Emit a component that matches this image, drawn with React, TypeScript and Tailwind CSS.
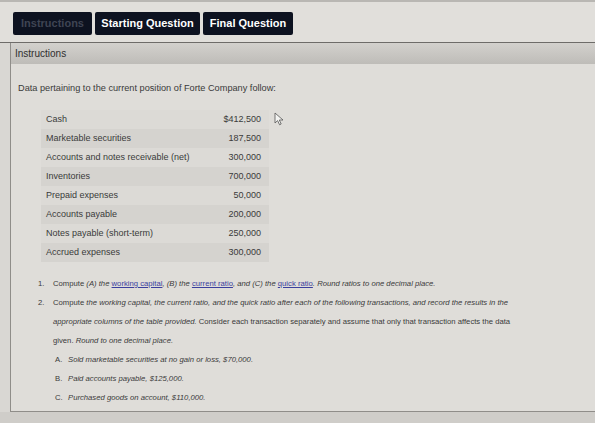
import React from "react";

const rows: [string, string][] = [
  ["Cash", "$412,500"],
  ["Marketable securities", "187,500"],
  ["Accounts and notes receivable (net)", "300,000"],
  ["Inventories", "700,000"],
  ["Prepaid expenses", "50,000"],
  ["Accounts payable", "200,000"],
  ["Notes payable (short-term)", "250,000"],
  ["Accrued expenses", "300,000"],
];

const transactions: [string, string][] = [
  ["A.", "Sold marketable securities at no gain or loss, $70,000."],
  ["B.", "Paid accounts payable, $125,000."],
  ["C.", "Purchased goods on account, $110,000."],
  ["D.", "Paid notes payable, $100,000."],
];

function Link({ children }: { children: React.ReactNode }) {
  return <span className="text-[#3b3f9e] underline">{children}</span>;
}

function Cursor() {
  return (
    <svg
      className="absolute left-[274px] top-[112px]"
      width="11"
      height="14"
      viewBox="0 0 11 14"
    >
      <path
        d="M1 1 L1 11 L3.6 8.6 L5.6 12.8 L7.2 12 L5.3 8 L9 8 Z"
        fill="#f4f4f2"
        stroke="#555"
        strokeWidth="0.8"
      />
    </svg>
  );
}

export default function App() {
  return (
    <div className="relative flex h-[423px] w-[595px] flex-col overflow-hidden bg-[#d9d7d3] font-['Liberation_Sans',Arial,sans-serif] text-[#333]">
      {/* tab strip */}
      <div className="h-[43px] shrink-0 border-t-2 border-b border-t-[#b9b7b3] border-b-[#6e6c69] bg-[#e1dfdb] pl-[13px] pt-[10px]">
        <div className="flex gap-[3px]">
          <div className="flex h-[23px] w-[79px] items-center justify-center rounded-[2px] bg-[#0d1220] text-[11px] font-bold text-[#3f4453]">
            Instructions
          </div>
          <div className="flex h-[23px] w-[105px] items-center justify-center rounded-[2px] bg-[#0d1220] text-[11px] font-bold text-white">
            Starting Question
          </div>
          <div className="flex h-[23px] w-[90px] items-center justify-center rounded-[2px] bg-[#0d1220] text-[11px] font-bold text-white">
            Final Question
          </div>
        </div>
      </div>

      <div className="flex min-h-0 flex-1 flex-col">
        {/* panel */}
        <div className="ml-[10px] flex h-[369px] flex-col overflow-hidden border-b border-l border-[#8f8d89]">
          <div className="flex h-[21px] shrink-0 items-center bg-gradient-to-b from-[#d3d1cd] to-[#bebcb8] pl-[4px] text-[10px] text-[#2f2f2f]">
            Instructions
          </div>
          <div className="flex-1 bg-[#dfddd9] pl-[7px] pt-[18px]">
            <p className="text-[9.2px] leading-[12px] text-[#3a3a3a]">
              Data pertaining to the current position of Forte Company follow:
            </p>

            <div className="ml-[23px] mt-[16px] w-[228px]">
              {rows.map(([label, value], i) => (
                <div
                  key={label}
                  className={`flex h-[19px] items-center justify-between pl-[5px] pr-[8px] text-[9px] text-[#3a3a3a] ${
                    i % 2 === 1 ? "bg-[#d5d3cf]" : "bg-[#dcdad6]"
                  }`}
                >
                  <span>{label}</span>
                  <span>{value}</span>
                </div>
              ))}
            </div>

            <div className="mt-[12px] pl-[20px] text-[7.7px] leading-[19px] text-[#3a3a3a]">
              <div className="flex">
                <span className="w-[15px] shrink-0">1.</span>
                <p>
                  Compute <i>(A) the</i> <Link>working capital</Link>
                  <i>, (B) the</i> <Link>current ratio</Link>
                  <i>, and (C) the</i> <Link>quick ratio</Link>
                  <i>. Round ratios to one decimal place.</i>
                </p>
              </div>
              <div className="flex">
                <span className="w-[15px] shrink-0">2.</span>
                <div className="w-[465px]">
                  <p>
                    Compute{" "}
                    <i>
                      the working capital, the current ratio, and the quick ratio after
                      each of the following transactions, and record the results in the
                      appropriate columns of the table provided.
                    </i>{" "}
                    Consider each transaction separately and assume that only that
                    transaction affects the data given. <i>Round to one decimal place.</i>
                  </p>
                  <div className="pl-[2px]">
                    {transactions.map(([letter, text]) => (
                      <div key={letter} className="flex">
                        <span className="w-[13px] shrink-0">{letter}</span>
                        <i>{text}</i>
                      </div>
                    ))}
                  </div>
                </div>
              </div>
            </div>
          </div>
        </div>
        <div className="flex-1 bg-[#cfcdc9]" />
      </div>

      <Cursor />
    </div>
  );
}
